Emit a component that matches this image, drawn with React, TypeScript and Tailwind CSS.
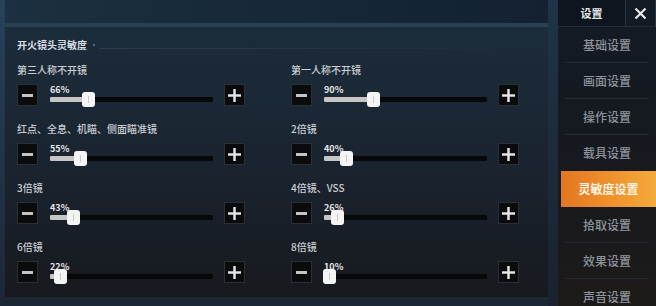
import React from "react";

type S = { label: string; pct: number; pos: number };

const rows: [S, S][] = [
  [
    { label: "第三人称不开镜", pct: 66, pos: 38 },
    { label: "第一人称不开镜", pct: 90, pos: 49 },
  ],
  [
    { label: "红点、全息、机瞄、侧面瞄准镜", pct: 55, pos: 30 },
    { label: "2倍镜", pct: 40, pos: 22 },
  ],
  [
    { label: "3倍镜", pct: 43, pos: 23 },
    { label: "4倍镜、VSS", pct: 26, pos: 13 },
  ],
  [
    { label: "6倍镜", pct: 22, pos: 10 },
    { label: "8倍镜", pct: 10, pos: 5 },
  ],
];

const menu = ["基础设置", "画面设置", "操作设置", "载具设置", "灵敏度设置", "拾取设置", "效果设置", "声音设置"];

function Btn({ plus }: { plus?: boolean }) {
  return (
    <div className="w-[21px] h-[22px] shrink-0 bg-[#0a0b0d] border border-[#2a3036] flex items-center justify-center">
      {plus ? (
        <svg width="13" height="13" viewBox="0 0 13 13">
          <rect x="5.25" y="0" width="2.5" height="13" fill="#e4e4e4" />
          <rect x="0" y="5.25" width="13" height="2.5" fill="#e4e4e4" />
        </svg>
      ) : (
        <svg width="11" height="3" viewBox="0 0 11 3">
          <rect x="0" y="0" width="11" height="3" fill="#c4c4c4" />
        </svg>
      )}
    </div>
  );
}

function Cell({ s }: { s: S }) {
  return (
    <div className="flex flex-col">
      <div className="h-[12px] text-[10px] leading-[12px] text-[#c9cdd2] font-medium whitespace-nowrap">{s.label}</div>
      <div className="mt-[8px] h-[22px] flex items-start">
        <Btn />
        <div className="relative ml-[12px] w-[163px] h-[22px] shrink-0">
          <div className="absolute left-0 top-[1px] text-[9px] leading-[9px] font-bold text-[#e6e6e6]">{s.pct}%</div>
          <div className="absolute left-0 right-0 top-[13px] h-[5px] bg-[#07080a] rounded-[1px]" />
          <div className="absolute left-0 top-[13px] h-[5px] bg-[#c6c6c6] rounded-l-[1px]" style={{ width: s.pos }} />
          <div
            className="absolute top-[8px] w-[13px] h-[15px] bg-[#f4f4f4] rounded-[3px] flex items-center justify-center"
            style={{ left: s.pos - 6.5 }}
          >
            <div className="w-px h-[7px] bg-[#c8c8c8]" />
          </div>
        </div>
        <div className="ml-[11px]">
          <Btn plus />
        </div>
      </div>
    </div>
  );
}

export default function App() {
  return (
    <div
      className="flex w-[656px] h-[306px] overflow-hidden bg-[#1d3144]"
      style={{ fontFamily: '"Noto Sans CJK SC", "Noto Sans", sans-serif' }}
    >
      <div className="w-[548px] shrink-0 flex flex-col pl-[5px] pb-[9px] bg-gradient-to-b from-[#27425a] to-[#1c2736]">
        <div className="h-[27px] shrink-0 bg-gradient-to-r from-[#1b3040] to-[#132131] border-b-[4px] border-[#28404f]" />
        <div className="flex-1 flex flex-col pl-[12px] pt-[12px] bg-gradient-to-b from-[#1c2c3b] via-[#1a2430] to-[#17191e]">
          <div className="h-[12px] flex items-center">
            <span className="text-[10px] leading-[12px] font-bold text-[#d9dde2]">开火镜头灵敏度</span>
            <span className="ml-[6px] w-[2px] h-[2px] bg-[#56687a]" />
            <div className="ml-[4px] mt-[6px] flex-1 h-px bg-gradient-to-r from-[#2c3e4e] via-[#243444] to-transparent" />
          </div>
          <div className="mt-[13px] grid grid-cols-[274px_274px] gap-y-[17px]">
            {rows.map((r, i) => (
              <React.Fragment key={i}>
                <Cell s={r[0]} />
                <Cell s={r[1]} />
              </React.Fragment>
            ))}
          </div>
        </div>
      </div>
      <div className="w-[10px] shrink-0 bg-gradient-to-b from-[#1f3448] to-[#1a2230]" />
      <div className="w-[98px] shrink-0 flex flex-col bg-gradient-to-b from-[#131b25] via-[#16191f] to-[#1d1a19]">
        <div className="h-[27px] shrink-0 flex border-b border-[#242c36]">
          <div className="w-[67px] flex items-center justify-center bg-[#0f151e] text-[11px] font-bold text-[#e2e4e6]">设置</div>
          <div className="w-[31px] flex items-center justify-center bg-[#131a23] border-l border-r border-[#2a3440]">
            <svg width="13" height="13" viewBox="0 0 13 13">
              <path d="M1.5 1.5 L11.5 11.5 M11.5 1.5 L1.5 11.5" stroke="#e8e8e8" strokeWidth="2.2" />
            </svg>
          </div>
        </div>
        {menu.map((m, i) => {
          const active = i === 4;
          if (active) {
            return (
              <div
                key={m}
                className="h-[36px] shrink-0 ml-[3px] flex items-center justify-center bg-gradient-to-r from-[#e3771f] via-[#ee902c] to-[#f4aa3a] text-[12px] font-bold text-[#fff4e6]"
              >
                {m}
              </div>
            );
          }
          const sep = i !== 3 && i !== 7;
          return (
            <div key={m} className="h-[36px] shrink-0 flex flex-col">
              <div className="flex-1 flex items-center justify-center text-[12px] font-medium text-[#8d939b]">{m}</div>
              {sep ? <div className="mx-[7px] h-px bg-[#262b33]" /> : <div className="h-px" />}
            </div>
          );
        })}
      </div>
    </div>
  );
}
